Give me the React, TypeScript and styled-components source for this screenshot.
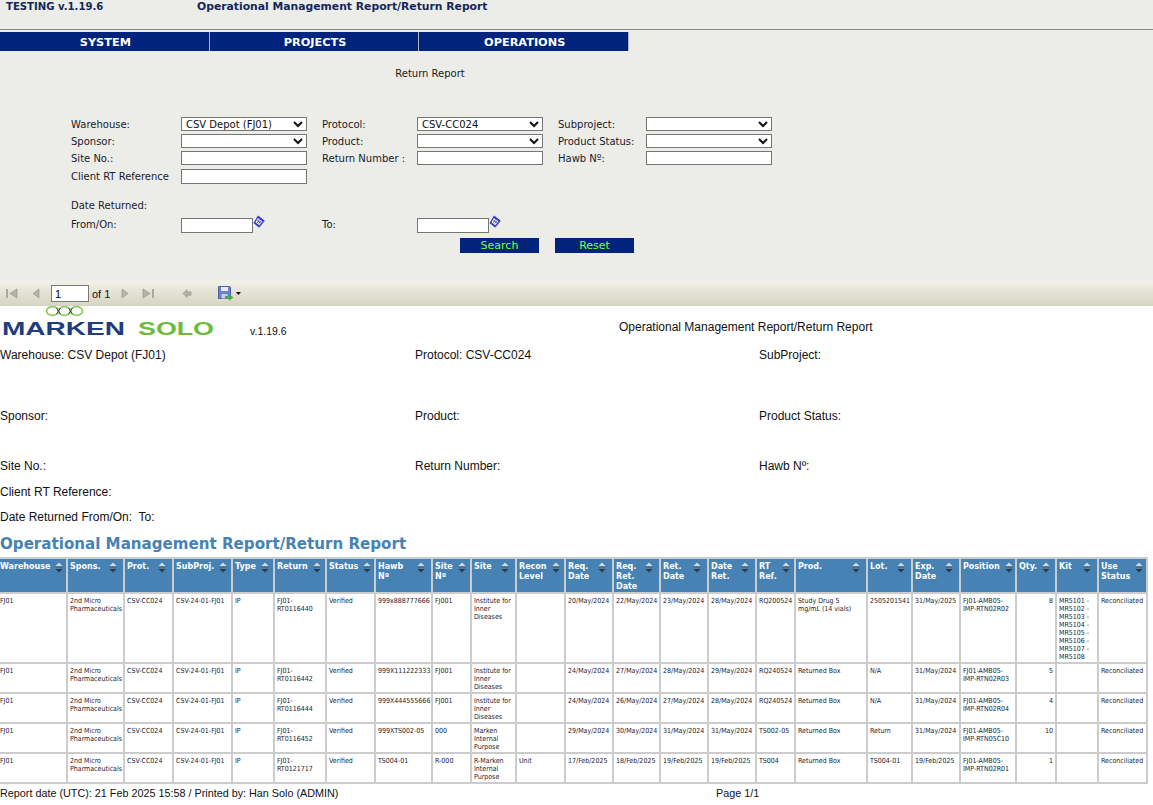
import React from "react";
import styled, { createGlobalStyle } from "styled-components";

const GlobalStyle = createGlobalStyle`
  html, body {
    margin: 0;
    padding: 0;
    background: #ffffff;
  }
  body {
    font-family: "DejaVu Sans", Verdana, sans-serif;
    overflow: hidden;
  }
`;

const Page = styled.div`
  width: 1153px;
  height: 805px;
  overflow: hidden;
`;

const TopArea = styled.div`
  background: #ecede8;
  height: 281px;
`;

const TitleBar = styled.div`
  height: 29px;
  border-bottom: 1px solid #8a8a8a;
  box-sizing: content-box;
  display: flex;
  padding-left: 6px;
  color: #14285a;
  font-size: 10.1px;
  font-weight: bold;
  line-height: 13px;
`;

const VersionText = styled.div`
  width: 191px;
`;

const PageTitle = styled.div`
  font-size: 10.8px;
`;

const NavBar = styled.nav`
  display: flex;
  width: 629px;
  height: 19px;
  margin-top: 2px;
  background: #00247d;
  border-right: 1px solid #b5b5b5;
  box-sizing: border-box;
`;

const NavItem = styled.div`
  flex: 1;
  padding-left: 2px;
  color: #ffffff;
  font-size: 11.3px;
  font-weight: bold;
  line-height: 21px;
  text-align: center;
  & + & {
    border-left: 1px solid #b5b5b5;
  }
`;

const SectionTitle = styled.div`
  width: 860px;
  margin-top: 16px;
  text-align: center;
  font-size: 10px;
  line-height: 13px;
  color: #1a1a1a;
`;

const FormGrid = styled.div`
  display: grid;
  grid-template-columns: 110px 141px 95px 141px 88px 126px;
  grid-template-rows: 17px 17px 18px 17px;
  margin: 37px 0 0 71px;
  align-items: start;
`;

const FieldLabel = styled.div`
  font-size: 10px;
  line-height: 15px;
  color: #1a1a2a;
  white-space: nowrap;
`;

const DropDown = styled.select`
  display: block;
  width: 126px;
  height: 14px;
  box-sizing: border-box;
  padding: 0;
  border: 1px solid #767676;
  border-radius: 0;
  background: #ffffff;
  font-family: inherit;
  font-size: 10px;
  color: #111111;
`;

const TextField = styled.input<{ $short?: boolean; $tall?: boolean }>`
  display: block;
  width: ${(p) => (p.$short ? "72px" : "126px")};
  height: ${(p) => (p.$tall ? "15px" : "14px")};
  box-sizing: border-box;
  padding: 0;
  border: 1px solid #767676;
  background: #ffffff;
`;

const DateBlock = styled.div`
  margin: 12px 0 0 71px;
`;

const DateRow = styled.div`
  display: grid;
  grid-template-columns: 110px 141px 95px 141px;
  margin-top: 4px;
  align-items: start;
`;

const DateField = styled.div`
  display: flex;
  align-items: flex-start;
  margin-top: 1px;
`;

const CalendarIcon = styled.svg`
  width: 12px;
  height: 13px;
  margin-top: -3px;
`;

const ButtonRow = styled.div`
  display: flex;
  gap: 16px;
  margin: 5px 0 0 460px;
`;

const ActionButton = styled.button`
  width: 79px;
  height: 15px;
  padding: 0;
  border: none;
  background: #00247d;
  color: #7fff3a;
  font-family: inherit;
  font-size: 11px;
  line-height: 15px;
`;

const Toolbar = styled.div`
  display: flex;
  align-items: center;
  height: 25px;
  box-sizing: border-box;
  padding-left: 6px;
  background: linear-gradient(#f3f2e9 0%, #e6e4d6 40%, #d6d4c2 100%);
  font-size: 11px;
  color: #111111;
`;

const ToolIcon = styled.svg<{ $gap: number }>`
  flex: none;
  margin-left: ${(p) => p.$gap}px;
`;

const PageInput = styled.input`
  width: 38px;
  height: 17px;
  box-sizing: border-box;
  margin-left: 11px;
  padding: 0 0 0 3px;
  border: 1px solid #7a7a7a;
  background: #ffffff;
  font-family: "Liberation Sans", Arial, sans-serif;
  font-size: 11px;
`;

const PageOf = styled.span`
  margin-left: 3px;
  font-family: "Liberation Sans", Arial, sans-serif;
`;

const ReportHeader = styled.div`
  display: flex;
  height: 42px;
  font-family: "Liberation Sans", Arial, sans-serif;
  color: #111111;
`;

const LogoSvg = styled.svg`
  flex: none;
  width: 250px;
  height: 32px;
`;

const ReportVersion = styled.div`
  width: 369px;
  margin-top: 19px;
  font-size: 10.5px;
  line-height: 13px;
`;

const ReportTitle = styled.div`
  margin-top: 14px;
  font-size: 12px;
  line-height: 14px;
`;

const MetaRow = styled.div<{ $height: number }>`
  display: grid;
  grid-template-columns: 415px 344px 1fr;
  height: ${(p) => p.$height}px;
  font-family: "Liberation Sans", Arial, sans-serif;
  font-size: 12px;
  line-height: 14px;
  color: #111111;
`;

const ReportHeading = styled.h1`
  margin: 0;
  height: 21px;
  color: #4682b4;
  font-size: 15.1px;
  font-weight: bold;
  line-height: 21px;
  white-space: nowrap;
`;

const ReportTable = styled.table`
  table-layout: fixed;
  width: 1147px;
  margin-top: 2px;
  border-collapse: collapse;
  font-size: 7px;
  font-stretch: condensed;
  line-height: 8px;
  color: #1a1a30;
`;

const HeadCell = styled.th`
  padding: 3px 1px 0 2px;
  border: 2px solid #cccccc;
  background: #4682b4;
  color: #ffffff;
  font-size: 8px;
  font-stretch: normal;
  font-weight: bold;
  line-height: 10px;
  text-align: left;
  vertical-align: top;
  &:first-child {
    border-left: none;
    padding-left: 0;
  }
`;

const HeadInner = styled.div`
  display: flex;
  justify-content: space-between;
  align-items: flex-start;
  min-height: 30px;
`;

const HeadLabel = styled.span<{ $tight?: boolean }>`
  flex: ${(p) => (p.$tight ? "none" : "1")};
  white-space: pre-line;
`;

const SortIcon = styled.svg`
  flex: none;
  width: 8px;
  height: 11px;
  margin: 0 5px 0 5px;
`;

const DataCell = styled.td<{ $right?: boolean }>`
  padding: 3px 2px 1px 2px;
  border: 2px solid #cccccc;
  vertical-align: top;
  white-space: pre-line;
  text-align: ${(p) => (p.$right ? "right" : "left")};
  &:first-child {
    border-left: none;
    padding-left: 0;
  }
`;

const Footer = styled.div`
  display: flex;
  margin-top: 2px;
  font-family: "Liberation Sans", Arial, sans-serif;
  font-size: 10.8px;
  line-height: 14px;
  color: #111111;
`;

const FooterLeft = styled.div`
  width: 716px;
`;

// right edge of each column, read off the reference
const COLUMNS: { label: string; edge: number; tight?: boolean }[] = [
  { label: "Warehouse", edge: 67, tight: true },
  { label: "Spons.", edge: 124, tight: true },
  { label: "Prot.", edge: 173, tight: true },
  { label: "SubProj.", edge: 232, tight: true },
  { label: "Type", edge: 274, tight: true },
  { label: "Return", edge: 326, tight: true },
  { label: "Status", edge: 375, tight: true },
  { label: "Hawb\nNº", edge: 432 },
  { label: "Site\nNº", edge: 471 },
  { label: "Site", edge: 516, tight: true },
  { label: "Recon\nLevel", edge: 565 },
  { label: "Req.\nDate", edge: 613 },
  { label: "Req.\nRet.\nDate", edge: 660 },
  { label: "Ret.\nDate", edge: 708 },
  { label: "Date\nRet.", edge: 756 },
  { label: "RT\nRef.", edge: 795 },
  { label: "Prod.", edge: 867, tight: true },
  { label: "Lot.", edge: 912, tight: true },
  { label: "Exp.\nDate", edge: 960 },
  { label: "Position", edge: 1016, tight: true },
  { label: "Qty.", edge: 1056, tight: true },
  { label: "Kit", edge: 1098, tight: true },
  { label: "Use\nStatus", edge: 1147 },
];

const ROWS: string[][] = [
  ["FJ01", "2nd Micro Pharmaceuticals", "CSV-CC024", "CSV-24-01-FJ01", "IP", "FJ01-RT0116440", "Verified", "999x888777666", "FJ001", "Institute for Inner Diseases", "", "20/May/2024", "22/May/2024", "23/May/2024", "28/May/2024", "RQ200524", "Study Drug 5\nmg/mL (14 vials)", "2505201541", "31/May/2025", "FJ01-AMB05-IMP-RTN02R02", "8", "MR5101 - MR5102 - MR5103 - MR5104 - MR5105 - MR5106 - MR5107 - MR5108", "Reconciliated"],
  ["FJ01", "2nd Micro Pharmaceuticals", "CSV-CC024", "CSV-24-01-FJ01", "IP", "FJ01-RT0116442", "Verified", "999X111222333", "FJ001", "Institute for Inner Diseases", "", "24/May/2024", "27/May/2024", "28/May/2024", "29/May/2024", "RQ240524", "Returned Box", "N/A", "31/May/2024", "FJ01-AMB05-IMP-RTN02R03", "5", "", "Reconciliated"],
  ["FJ01", "2nd Micro Pharmaceuticals", "CSV-CC024", "CSV-24-01-FJ01", "IP", "FJ01-RT0116444", "Verified", "999X444555666", "FJ001", "Institute for Inner Diseases", "", "24/May/2024", "26/May/2024", "27/May/2024", "28/May/2024", "RQ240524", "Returned Box", "N/A", "31/May/2024", "FJ01-AMB05-IMP-RTN02R04", "4", "", "Reconciliated"],
  ["FJ01", "2nd Micro Pharmaceuticals", "CSV-CC024", "CSV-24-01-FJ01", "IP", "FJ01-RT0116452", "Verified", "999XTS002-05", "000", "Marken Internal Purpose", "", "29/May/2024", "30/May/2024", "31/May/2024", "31/May/2024", "TS002-05", "Returned Box", "Return", "31/May/2024", "FJ01-AMB05-IMP-RTN05C10", "10", "", "Reconciliated"],
  ["FJ01", "2nd Micro Pharmaceuticals", "CSV-CC024", "CSV-24-01-FJ01", "IP", "FJ01-RT0121717", "Verified", "TS004-01", "R-000", "R-Marken Internal Purpose", "Unit", "17/Feb/2025", "18/Feb/2025", "19/Feb/2025", "19/Feb/2025", "TS004", "Returned Box", "TS004-01", "19/Feb/2025", "FJ01-AMB05-IMP-RTN02R01", "1", "", "Reconciliated"],
];

const QTY_COLUMN = 20;

const SortGlyph = () => (
  <SortIcon viewBox="0 0 8 11">
    <path d="M4 0.5 L7.5 4 H0.5 Z" fill="#d4d8dc" />
    <path d="M0.5 5.5 H7.5" stroke="#5a6670" strokeWidth="1" />
    <path d="M0.5 7 H7.5 L4 10.5 Z" fill="#2b3a48" />
  </SortIcon>
);

const Calendar = () => (
  <CalendarIcon viewBox="0 0 12 13">
    <path d="M5 0.5 L11.5 5.5 L6 12.5 L0.5 8 Z" fill="#2a35d0" />
    <path d="M4.8 3 L9.4 6.2 L6.2 10.2 L2.4 7.2 Z" fill="#ffffff" />
    <path d="M4.2 5 L7.6 7.6 M6.4 4.4 L4.2 7.9 M8 5.6 L5.9 8.6" stroke="#2a35d0" strokeWidth="0.8" />
    <path d="M6.2 12.6 L11.8 5.6" stroke="#7d828e" strokeWidth="1" />
  </CalendarIcon>
);

const Logo = () => (
  <LogoSvg viewBox="0 0 250 32">
    <g fill="none" stroke="#8ccb5c" strokeWidth="1.7">
      <ellipse cx="52.5" cy="5" rx="6" ry="4.4" />
      <ellipse cx="64.5" cy="5" rx="6" ry="4.4" />
      <ellipse cx="76.5" cy="5" rx="6" ry="4.4" />
    </g>
    <path d="M56.5 2 L60.5 8 M60.5 2 L56.5 8 M68.5 2 L72.5 8 M72.5 2 L68.5 8" stroke="#2b4a78" strokeWidth="1" />
    <text
      x="2"
      y="29"
      textLength="123"
      lengthAdjust="spacingAndGlyphs"
      fontFamily="'Liberation Sans', Arial, sans-serif"
      fontWeight="bold"
      fontSize="18"
      fill="#1f3c7c"
    >
      MARKEN
    </text>
    <text
      x="138"
      y="29"
      textLength="76"
      lengthAdjust="spacingAndGlyphs"
      fontFamily="'Liberation Sans', Arial, sans-serif"
      fontWeight="bold"
      fontSize="18"
      fill="#6cbb3c"
    >
      SOLO
    </text>
  </LogoSvg>
);

export default function App() {
  return (
    <Page>
      <GlobalStyle />
      <TopArea>
        <TitleBar>
          <VersionText>TESTING v.1.19.6</VersionText>
          <PageTitle>Operational Management Report/Return Report</PageTitle>
        </TitleBar>
        <NavBar>
          <NavItem>SYSTEM</NavItem>
          <NavItem>PROJECTS</NavItem>
          <NavItem>OPERATIONS</NavItem>
        </NavBar>
        <SectionTitle>Return Report</SectionTitle>
        <FormGrid>
          <FieldLabel>Warehouse:</FieldLabel>
          <DropDown defaultValue="fj01">
            <option value="fj01">CSV Depot (FJ01)</option>
          </DropDown>
          <FieldLabel>Protocol:</FieldLabel>
          <DropDown defaultValue="cc024">
            <option value="cc024">CSV-CC024</option>
          </DropDown>
          <FieldLabel>Subproject:</FieldLabel>
          <DropDown>
            <option></option>
          </DropDown>

          <FieldLabel>Sponsor:</FieldLabel>
          <DropDown>
            <option></option>
          </DropDown>
          <FieldLabel>Product:</FieldLabel>
          <DropDown>
            <option></option>
          </DropDown>
          <FieldLabel>Product Status:</FieldLabel>
          <DropDown>
            <option></option>
          </DropDown>

          <FieldLabel>Site No.:</FieldLabel>
          <TextField />
          <FieldLabel>Return Number :</FieldLabel>
          <TextField />
          <FieldLabel>Hawb Nº:</FieldLabel>
          <TextField />

          <FieldLabel>Client RT Reference</FieldLabel>
          <TextField $tall />
        </FormGrid>
        <DateBlock>
          <FieldLabel>Date Returned:</FieldLabel>
          <DateRow>
            <FieldLabel>From/On:</FieldLabel>
            <DateField>
              <TextField $short $tall />
              <Calendar />
            </DateField>
            <FieldLabel>To:</FieldLabel>
            <DateField>
              <TextField $short $tall />
              <Calendar />
            </DateField>
          </DateRow>
        </DateBlock>
        <ButtonRow>
          <ActionButton>Search</ActionButton>
          <ActionButton>Reset</ActionButton>
        </ButtonRow>
      </TopArea>

      <Toolbar>
        <ToolIcon $gap={0} width="12" height="11" viewBox="0 0 12 11">
          <path d="M1 1 V10" stroke="#a9a99c" strokeWidth="2" />
          <path d="M11 1 L4 5.5 L11 10 Z" fill="#b4b4a8" stroke="#8f8f84" strokeWidth="0.6" />
        </ToolIcon>
        <ToolIcon $gap={14} width="8" height="11" viewBox="0 0 8 11">
          <path d="M7 1 L1 5.5 L7 10 Z" fill="#b4b4a8" stroke="#8f8f84" strokeWidth="0.6" />
        </ToolIcon>
        <PageInput defaultValue="1" />
        <PageOf>of 1</PageOf>
        <ToolIcon $gap={11} width="8" height="11" viewBox="0 0 8 11">
          <path d="M1 1 L7 5.5 L1 10 Z" fill="#b4b4a8" stroke="#8f8f84" strokeWidth="0.6" />
        </ToolIcon>
        <ToolIcon $gap={13} width="12" height="11" viewBox="0 0 12 11">
          <path d="M1 1 L8 5.5 L1 10 Z" fill="#b4b4a8" stroke="#8f8f84" strokeWidth="0.6" />
          <path d="M11 1 V10" stroke="#a9a99c" strokeWidth="2" />
        </ToolIcon>
        <ToolIcon $gap={28} width="10" height="11" viewBox="0 0 10 11">
          <path d="M1 5.5 L5 1.5 V3.8 H9 V7.2 H5 V9.5 Z" fill="#b4b4a8" stroke="#8f8f84" strokeWidth="0.6" />
        </ToolIcon>
        <ToolIcon $gap={26} width="16" height="15" viewBox="0 0 16 15">
          <path d="M0.5 0.5 H11.5 L12.5 1.5 V12.5 H0.5 Z" fill="#6f7fd6" stroke="#3a4896" strokeWidth="0.8" />
          <path d="M3 1 H10 V5 H3 Z" fill="#e8ecf4" />
          <path d="M3.5 8 H9.5 V12.5 H3.5 Z" fill="#c9cfe0" />
          <path d="M7 10 H11 V8 L15.5 11.5 L11 14.8 V13 H7 Z" fill="#4aa850" />
        </ToolIcon>
        <ToolIcon $gap={2} width="5" height="3" viewBox="0 0 5 3">
          <path d="M0 0 H5 L2.5 3 Z" fill="#111111" />
        </ToolIcon>
      </Toolbar>

      <ReportHeader>
        <Logo />
        <ReportVersion>v.1.19.6</ReportVersion>
        <ReportTitle>Operational Management Report/Return Report</ReportTitle>
      </ReportHeader>

      <MetaRow $height={61}>
        <div>Warehouse: CSV Depot (FJ01)</div>
        <div>Protocol: CSV-CC024</div>
        <div>SubProject:</div>
      </MetaRow>
      <MetaRow $height={50}>
        <div>Sponsor:</div>
        <div>Product:</div>
        <div>Product Status:</div>
      </MetaRow>
      <MetaRow $height={26}>
        <div>Site No.:</div>
        <div>Return Number:</div>
        <div>Hawb Nº:</div>
      </MetaRow>
      <MetaRow $height={25}>
        <div>Client RT Reference:</div>
      </MetaRow>
      <MetaRow $height={24}>
        <div>Date Returned From/On:&nbsp; To:</div>
      </MetaRow>

      <ReportHeading>Operational Management Report/Return Report</ReportHeading>
      <ReportTable>
        <colgroup>
          {COLUMNS.map((col, i) => (
            <col key={col.label} width={col.edge - (i ? COLUMNS[i - 1].edge : 0)} />
          ))}
        </colgroup>
        <thead>
          <tr>
            {COLUMNS.map((col) => (
              <HeadCell key={col.label}>
                <HeadInner>
                  <HeadLabel $tight={col.tight}>{col.label}</HeadLabel>
                  <SortGlyph />
                </HeadInner>
              </HeadCell>
            ))}
          </tr>
        </thead>
        <tbody>
          {ROWS.map((row) => (
            <tr key={row[5]}>
              {row.map((value, i) => (
                <DataCell key={i} $right={i === QTY_COLUMN}>
                  {value}
                </DataCell>
              ))}
            </tr>
          ))}
        </tbody>
      </ReportTable>
      <Footer>
        <FooterLeft>Report date (UTC): 21 Feb 2025 15:58 / Printed by: Han Solo (ADMIN)</FooterLeft>
        <div>Page 1/1</div>
      </Footer>
    </Page>
  );
}
